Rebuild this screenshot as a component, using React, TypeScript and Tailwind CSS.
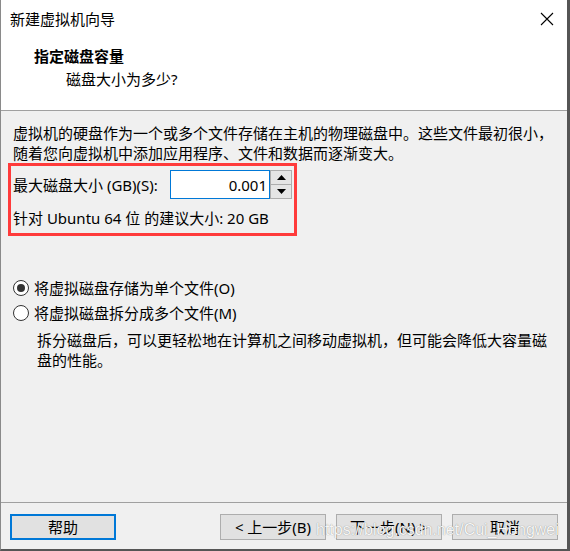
import React from 'react';

const FONT = "font-['Noto_Sans','Noto_Sans_CJK_SC',sans-serif]";

function CloseIcon() {
  return (
    <svg width="14" height="14" viewBox="0 0 14 14" className="block">
      <path d="M1 1 L13 13 M13 1 L1 13" stroke="#000" strokeWidth="1.1" fill="none" />
    </svg>
  );
}

function Radio({ checked }: { checked?: boolean }) {
  return (
    <span className="w-[16px] h-[16px] rounded-full border border-[#333] bg-white flex items-center justify-center shrink-0">
      {checked && <span className="w-[8px] h-[8px] rounded-full bg-[#333]" />}
    </span>
  );
}

function Arrow({ up }: { up?: boolean }) {
  return (
    <svg width="9" height="5" viewBox="0 0 9 5" className="block">
      <path d={up ? 'M0 5 L4.5 0 L9 5 Z' : 'M0 0 L4.5 5 L9 0 Z'} fill="#000" />
    </svg>
  );
}

function Button({ label, primary }: { label: string; primary?: boolean }) {
  return (
    <button
      className={
        'w-[106px] h-[26px] bg-[#e1e1e1] text-[15px] text-black flex items-center justify-center ' +
        (primary ? 'border-2 border-[#0078d7]' : 'border border-[#adadad]')
      }
    >
      {label}
    </button>
  );
}

export default function App() {
  return (
    <div
      className={`${FONT} relative w-[570px] h-[551px] flex flex-col bg-[#f0f0f0] border-l border-l-[#8a8a8a] border-r-[3px] border-r-[#555] border-b-2 border-b-[#555] text-black text-[15px] leading-[20px] overflow-hidden`}
    >
      {/* header */}
      <div className="h-[111px] bg-white border-b border-[#a0a0a0] shrink-0">
        <div className="h-[37px] flex items-center justify-between pl-[9px] pr-[13px]">
          <span>新建虚拟机向导</span>
          <CloseIcon />
        </div>
        <div className="pl-[33px] mt-[8px] font-bold leading-[22px]">指定磁盘容量</div>
        <div className="pl-[65px] mt-[1px] leading-[22px]">磁盘大小为多少?</div>
      </div>

      {/* body */}
      <div className="flex-1 pt-[12px]">
        <p className="pl-[12px] whitespace-nowrap">
          虚拟机的硬盘作为一个或多个文件存储在主机的物理磁盘中。这些文件最初很小，
          <br />
          随着您向虚拟机中添加应用程序、文件和数据而逐渐变大。
        </p>

        <div className="ml-[7px] w-[289px] border-[3px] border-[#ff3b3b] pl-[2px] pt-[4px] pb-[5px]">
          <div className="flex items-center">
            <label className="w-[157px] whitespace-nowrap">最大磁盘大小 (GB)(S):</label>
            <div className="w-[100px] h-[29px] border border-[#0078d7] bg-white flex items-center justify-end pr-[2px]">
              0.001
            </div>
            <div className="w-[22px] h-[29px] flex flex-col">
              <div className="h-[15px] border border-[#adadad] bg-[#e5e5e5] flex items-center justify-center">
                <Arrow up />
              </div>
              <div className="h-[14px] border border-t-0 border-[#adadad] bg-[#e5e5e5] flex items-center justify-center">
                <Arrow />
              </div>
            </div>
          </div>
          <div className="mt-[9px] whitespace-nowrap">针对 Ubuntu 64 位 的建议大小: 20 GB</div>
        </div>

        <div className="mt-[39px] pl-[12px]">
          <div className="h-[25px] flex items-center gap-[5px]">
            <Radio checked />
            <span>将虚拟磁盘存储为单个文件(O)</span>
          </div>
          <div className="h-[25px] flex items-center gap-[5px]">
            <Radio />
            <span>将虚拟磁盘拆分成多个文件(M)</span>
          </div>
        </div>
        <p className="mt-[5px] ml-[36px] whitespace-nowrap">
          拆分磁盘后，可以更轻松地在计算机之间移动虚拟机，但可能会降低大容量磁
          <br />
          盘的性能。
        </p>
      </div>

      {/* footer */}
      <div className="h-[47px] border-t border-[#a0a0a0] shrink-0 flex items-start justify-between pt-[11px] pl-[9px] pr-[9px]">
        <Button label="帮助" primary />
        <div className="flex gap-[10px]">
          <Button label="< 上一步(B)" />
          <Button label="下一步(N) >" />
          <Button label="取消" />
        </div>
      </div>

      <div className="absolute left-[315px] top-[520px] font-['Liberation_Sans',sans-serif] text-[16px] leading-[20px] text-[#f6f6f6] [text-shadow:0_0_1px_rgba(0,0,0,0.45)] pointer-events-none whitespace-nowrap">
        https://blog.csdn.net/Cui_Hongwei
      </div>
    </div>
  );
}
